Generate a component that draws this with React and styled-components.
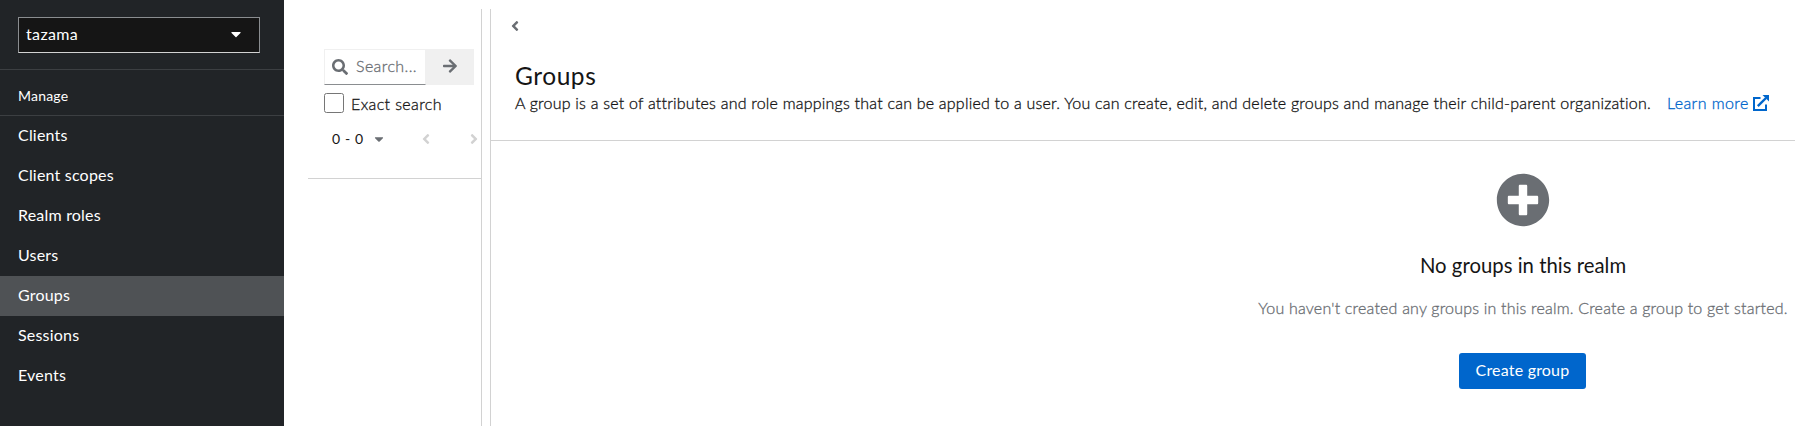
import React from 'react';
import styled, { createGlobalStyle, css } from 'styled-components';
import {
  FaAngleLeft, FaAngleRight, FaArrowRight, FaCaretDown, FaPlusCircle, FaSearch,
} from 'react-icons/fa';

const GlobalStyle = createGlobalStyle`
  *, *::before, *::after { box-sizing: border-box; }
  body {
    margin: 0;
    overflow: hidden;
    background: #fff;
    color: #151515;
    font: 400 16px/24px Lato, "Open Sans", sans-serif;
    letter-spacing: 0.2px;
  }
  button, input { font: inherit; letter-spacing: inherit; }
  svg { display: block; flex: none; }
`;

const bookWeight = css`
  font-weight: 300;
  -webkit-text-stroke: 0.3px currentColor;
`;

const Page = styled.div`
  display: flex;
  height: 426px;
  overflow: hidden;
`;

const Sidebar = styled.aside`
  flex: 0 0 284px;
  background: #212427;
  color: #fff;
`;

const RealmArea = styled.div`
  height: 70px;
  padding: 17px 24px 0 18px;
  border-bottom: 1px solid #3c3f42;
`;

const RealmSelect = styled.button`
  display: flex;
  align-items: center;
  justify-content: space-between;
  width: 242px;
  height: 36px;
  padding: 0 15px 2px 7px;
  border: 1px solid #8a8d90;
  border-bottom-color: #d2d2d2;
  background: #151515;
  color: #fff;
  letter-spacing: 0.35px;
`;

const NavTitle = styled.h2`
  height: 46px;
  margin: 0;
  padding: 14px 18px 0;
  border-bottom: 1px solid #3c3f42;
  font-size: 14px;
  font-weight: 400;
`;

const NavItem = styled.a`
  display: block;
  height: 40px;
  padding: 7px 18px 9px;
  background: ${(p) => (p.$active ? '#4f5255' : 'transparent')};
`;

const TreePanel = styled.section`
  flex: 0 0 198px;
  min-width: 0;
  margin: 9px 0 0;
  padding-left: 24px;
  border-right: 1px solid #d2d2d2;
`;

const TreeToolbar = styled.div`
  height: 170px;
  padding: 40px 0 0 16px;
  border-bottom: 1px solid #d2d2d2;
`;

const SearchGroup = styled.form`
  display: flex;
  width: 150px;
  height: 36px;
`;

const SearchField = styled.label`
  display: flex;
  align-items: center;
  gap: 8px;
  width: 102px;
  padding: 0 0 1px 7px;
  border: 1px solid #f0f0f0;
  border-bottom-color: #8a8d90;
  color: #6a6e73;
`;

const SearchInput = styled.input`
  ${bookWeight}
  width: 68px;
  padding: 0 0 1px;
  border: 0;
  outline: 0;
  background: transparent;
  letter-spacing: 0.4px;
  &::placeholder { color: #6a6e73; opacity: 1; }
`;

const SearchButton = styled.button`
  display: grid;
  place-items: center;
  width: 48px;
  padding: 0 0 2px;
  border: 0;
  background: #f0f0f0;
  color: #6a6e73;
`;

const ExactRow = styled.label`
  ${bookWeight}
  display: flex;
  gap: 7px;
  margin-top: 8px;
  height: 24px;
  line-height: 22px;
  letter-spacing: 0.38px;
`;

const Checkbox = styled.input`
  appearance: none;
  width: 20px;
  height: 20px;
  margin: 0;
  border: 1px solid #767676;
  border-radius: 2.5px;
  background: #fff;
`;

const Pager = styled.div`
  display: flex;
  align-items: center;
  margin-top: 9px;
  padding-left: 8px;
  height: 26px;
  font-size: 14px;
`;

const PagerRange = styled.span`
  flex: none;
  width: 40px;
  letter-spacing: 0.6px;
`;

const PagerArrow = styled.span`
  margin-left: ${(p) => p.$gap}px;
  color: #d2d2d2;
`;

const CaretTone = styled.span`
  color: #6a6e73;
`;

const Main = styled.main`
  flex: none;
  width: 1305px;
  margin: 9px 0 0 8px;
  border-left: 1px solid #d2d2d2;
`;

const Header = styled.header`
  height: 132px;
  padding: 9px 0 0 24px;
  border-bottom: 1px solid #d2d2d2;
  white-space: nowrap;
`;

const Collapse = styled.button`
  display: block;
  height: 16px;
  margin: 0 0 0 -8px;
  padding: 0;
  border: 0;
  background: none;
  color: #6a6e73;
`;

const Title = styled.h1`
  margin: 26px 0 0;
  font-size: 24.5px;
  font-weight: 400;
  line-height: 31px;
  letter-spacing: 0.55px;
`;

const Description = styled.div`
  ${bookWeight}
  display: flex;
  align-items: center;
  letter-spacing: 0.216px;
`;

const LearnMore = styled.a`
  display: flex;
  align-items: center;
  gap: 4px;
  margin-left: 16px;
  color: #06c;
  letter-spacing: 0.42px;
`;

const EmptyState = styled.section`
  display: flex;
  flex-direction: column;
  align-items: center;
  width: 560px;
  margin: 32px 0 0 752px;
  color: #6a6e73;
  white-space: nowrap;
`;

const EmptyTitle = styled.h2`
  margin: 23px 0 0;
  color: #151515;
  font-size: 20.3px;
  font-weight: 400;
  line-height: 30px;
  letter-spacing: 0.03px;
`;

const EmptyText = styled.p`
  ${bookWeight}
  margin: 16px 0 0;
`;

const PrimaryButton = styled.button`
  width: 127px;
  height: 36px;
  margin: 33px 1px 0 0;
  padding: 0 0 2px;
  border: 0;
  border-radius: 3px;
  background: #06c;
  color: #fff;
`;

const ExternalIcon = () => (
  <svg width="16" height="16" viewBox="0 0 16 16" fill="none" stroke="currentColor" strokeWidth="2">
    <path d="M7.5 3H1v12h12V9.5" />
    <path d="M4.8 11.2 13 3" strokeWidth="2.4" />
    <path d="M9.5 0H16v6.5Z" fill="currentColor" stroke="none" />
  </svg>
);

const navItems = ['Clients', 'Client scopes', 'Realm roles', 'Users', 'Groups', 'Sessions', 'Events'];

export default function App() {
  return (
    <Page>
      <GlobalStyle />
      <Sidebar>
        <RealmArea>
          <RealmSelect>tazama<FaCaretDown size={16} /></RealmSelect>
        </RealmArea>
        <nav>
          <NavTitle>Manage</NavTitle>
          {navItems.map((item) => (
            <NavItem key={item} $active={item === 'Groups'}>{item}</NavItem>
          ))}
        </nav>
      </Sidebar>
      <TreePanel>
        <TreeToolbar>
          <SearchGroup>
            <SearchField>
              <FaSearch size={16} />
              <SearchInput placeholder="Search..." />
            </SearchField>
            <SearchButton type="button"><FaArrowRight size={16} /></SearchButton>
          </SearchGroup>
          <ExactRow><Checkbox type="checkbox" />Exact search</ExactRow>
          <Pager>
            <PagerRange>0 - 0</PagerRange>
            <CaretTone><FaCaretDown size={14} /></CaretTone>
            <PagerArrow $gap={32}><FaAngleLeft size={16} /></PagerArrow>
            <PagerArrow $gap={32}><FaAngleRight size={16} /></PagerArrow>
          </Pager>
        </TreeToolbar>
      </TreePanel>
      <Main>
        <Header>
          <Collapse><FaAngleLeft size={16} /></Collapse>
          <Title>Groups</Title>
          <Description>
            A group is a set of attributes and role mappings that can be applied to a user. You can create, edit, and delete groups and manage their child-parent organization.
            <LearnMore>Learn more<ExternalIcon /></LearnMore>
          </Description>
        </Header>
        <EmptyState>
          <FaPlusCircle size={54} />
          <EmptyTitle>No groups in this realm</EmptyTitle>
          <EmptyText>You haven't created any groups in this realm. Create a group to get started.</EmptyText>
          <PrimaryButton>Create group</PrimaryButton>
        </EmptyState>
      </Main>
    </Page>
  );
}
